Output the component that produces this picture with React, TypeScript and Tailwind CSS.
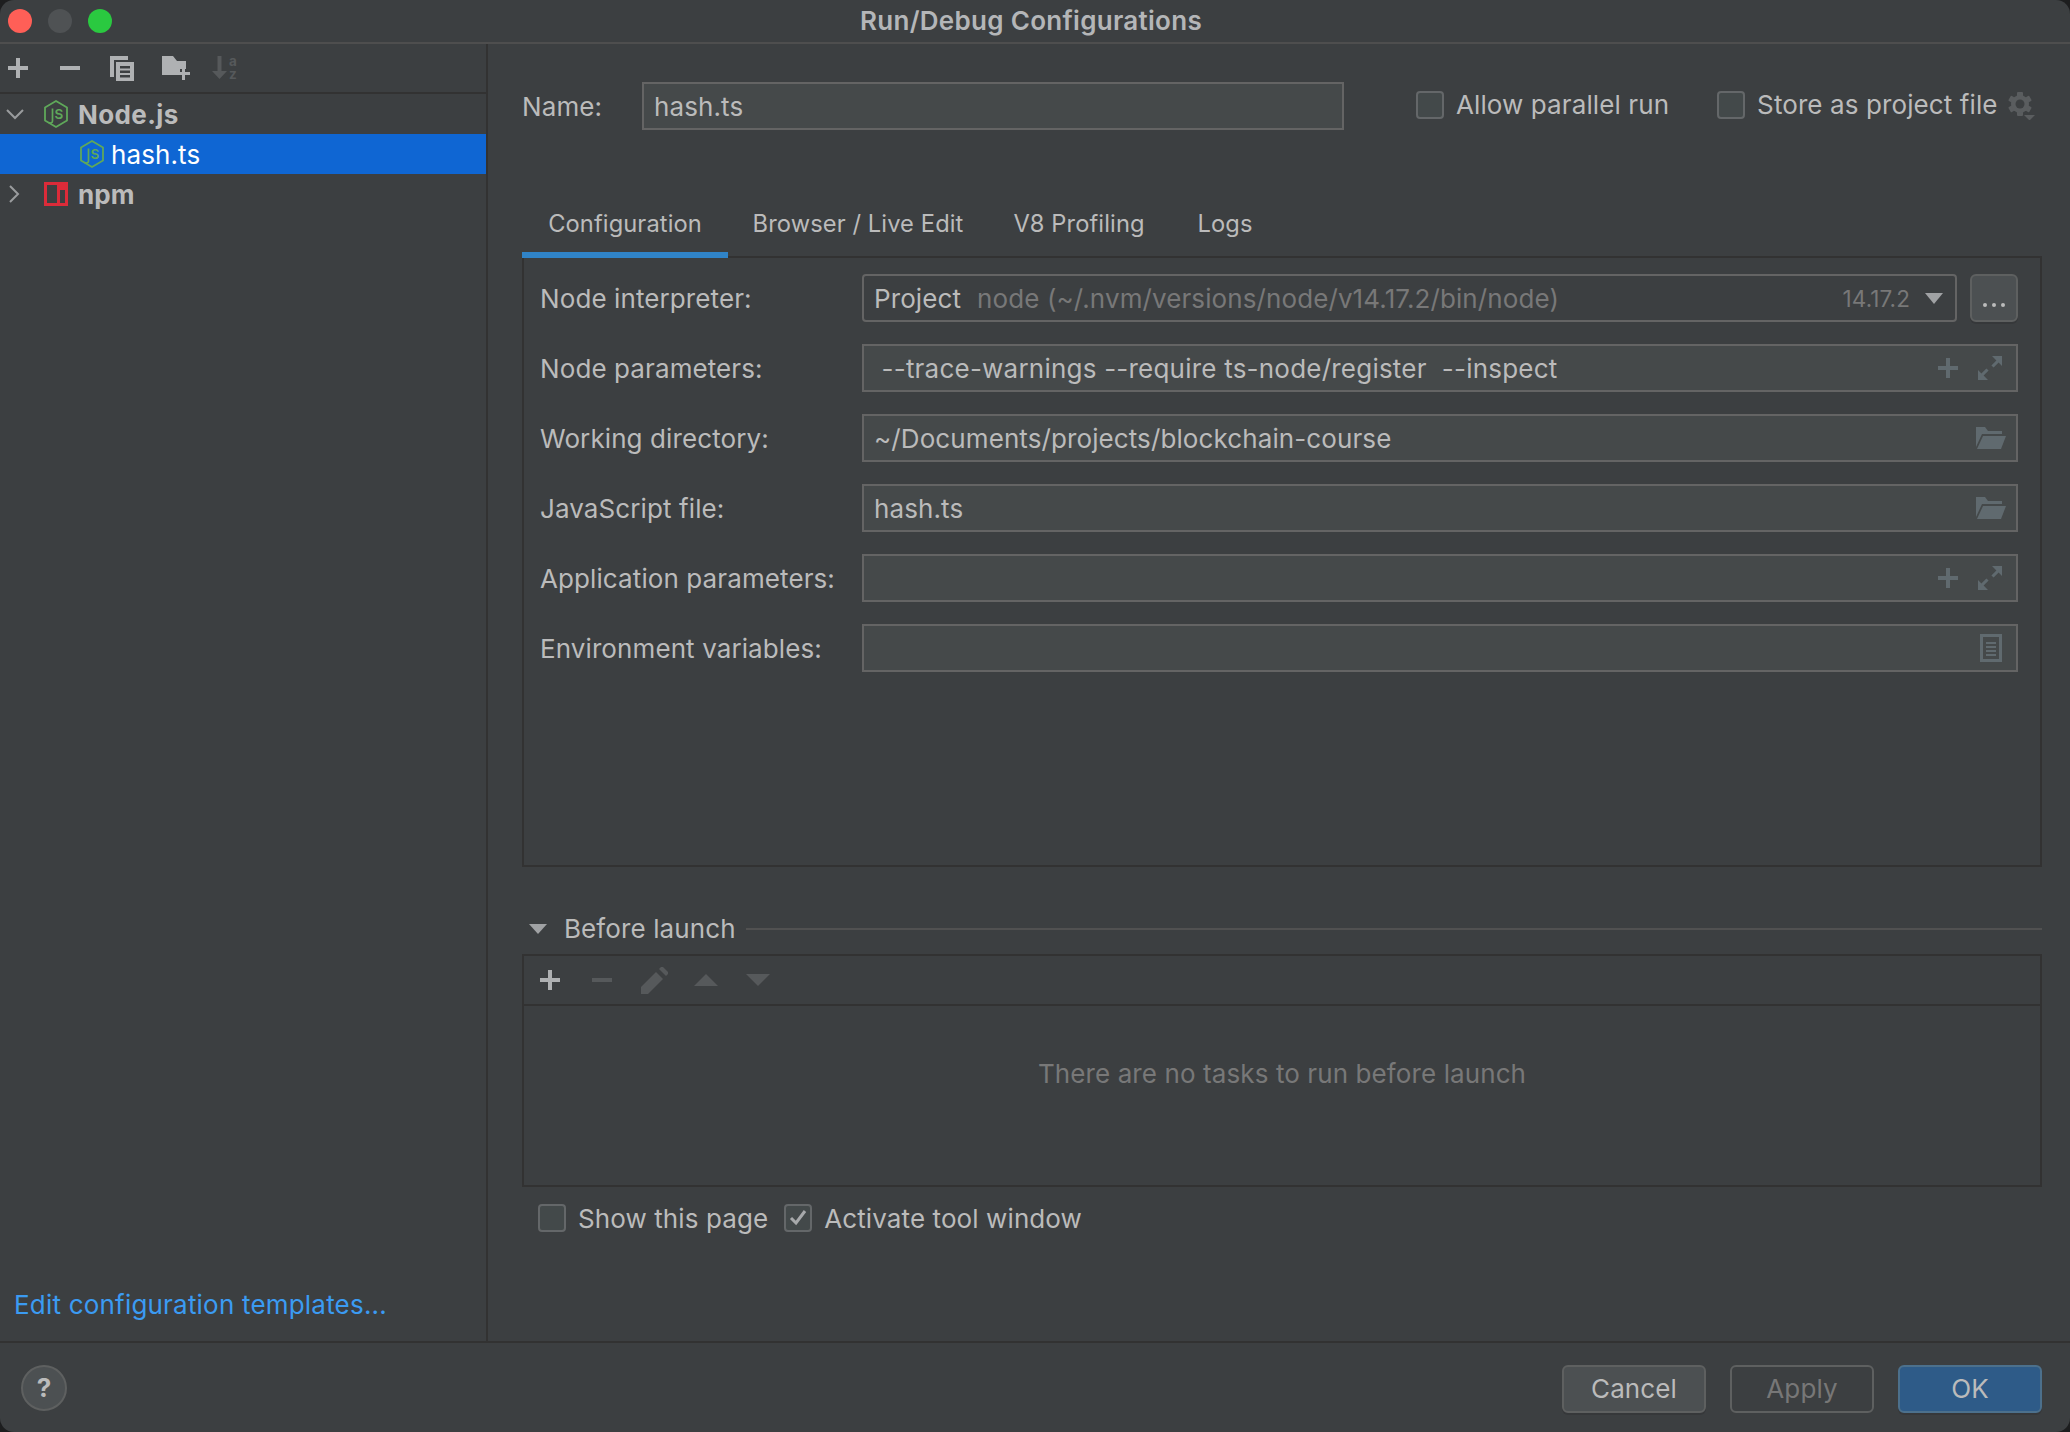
const font = "font-['Inter','Liberation_Sans',sans-serif]";

function Plus({ className = "" }: { className?: string }) {
  return (
    <svg width="20" height="20" viewBox="0 0 20 20" className={className} fill="currentColor">
      <rect x="8" y="0" width="4" height="20" />
      <rect x="0" y="8" width="20" height="4" />
    </svg>
  );
}

function Minus({ className = "" }: { className?: string }) {
  return (
    <svg width="20" height="4" viewBox="0 0 20 4" className={className} fill="currentColor">
      <rect width="20" height="4" />
    </svg>
  );
}

function CopyIcon() {
  return (
    <svg width="24" height="25" viewBox="0 0 24 25" className="text-[#afb1b3]" fill="currentColor">
      <path d="M0 0h18v4H4v17H0z" />
      <path fillRule="evenodd" d="M6 6h18v19H6zM10 10v2.500h10V10zM10 14.500v2.500h10v-2.500zM10 19v2.500h10V19z" />
    </svg>
  );
}

function FolderPlus() {
  return (
    <svg width="28" height="24" viewBox="0 0 28 24" className="text-[#afb1b3]" fill="currentColor">
      <path d="M0 0h11l4 5h9v8h-6v6H0z" />
      <path d="M20 12h3v4h5v3h-5v5h-3v-5h-5v-3h5z" />
    </svg>
  );
}

function SortIcon() {
  return (
    <svg width="30" height="34" viewBox="0 -5 30 34" className="text-[#56595b]" fill="currentColor">
      <path d="M5.500 0h4v15h5.500l-7.500 8-7.500-8h5.500z" />
      <text x="17" y="10" fontSize="13.500" fontWeight="700" fontFamily="Inter">a</text>
      <text x="17" y="23" fontSize="13.500" fontWeight="700" fontFamily="Inter">z</text>
    </svg>
  );
}

function NodeHex() {
  return (
    <svg width="24" height="28" viewBox="0 0 24 28" fill="none" className="shrink-0">
      <path d="M12 1 23 7.500v13L12 27 1 20.500v-13z" stroke="#5fa85a" strokeWidth="1.800" strokeLinejoin="round" />
      <path d="M8.500 8.500v12.500c0 2-2.400 2.600-4 1.400" stroke="#5fa85a" strokeWidth="1.700" />
      <text x="10.500" y="18.500" fontSize="13.500" fontWeight="600" fontFamily="Inter" fill="#5fa85a">S</text>
    </svg>
  );
}

function NpmIcon() {
  return (
    <svg width="24" height="24" viewBox="0 0 24 24" className="shrink-0">
      <path fillRule="evenodd" fill="#db2b39" d="M0 0h24v24H0zM3 3v18h10V3zM16 8v13h5V8z" />
    </svg>
  );
}

function Chevron({ down }: { down?: boolean }) {
  return (
    <svg width="18" height="18" viewBox="0 0 18 18" fill="none" stroke="#9a9c9e" strokeWidth="2" className="shrink-0">
      <path d={down ? "M1 5l8 8 8-8" : "M5 1l8 8-8 8"} />
    </svg>
  );
}

function Check({ on }: { on?: boolean }) {
  return (
    <span className="w-[28px] h-[28px] shrink-0 rounded-[4px] border-2 border-[#646769] bg-[#43494a] flex items-center justify-center">
      {on && (
        <svg width="18" height="16" viewBox="0 0 18 16" fill="none" stroke="#a7a9ab" strokeWidth="3">
          <path d="M2 8l5 5 9-12" />
        </svg>
      )}
    </span>
  );
}

function Gear() {
  return (
    <svg width="28" height="28" viewBox="0 0 28 28" className="ml-[10px]" fill="#5a5d5f">
      <rect x="9" y="0" width="6" height="24" rx="1" />
      <rect x="9" y="0" width="6" height="24" rx="1" transform="rotate(60 12 12)" />
      <rect x="9" y="0" width="6" height="24" rx="1" transform="rotate(120 12 12)" />
      <circle cx="12" cy="12" r="9" />
      <circle cx="12" cy="12" r="4.500" fill="#3c3f41" />
      <path d="M16 23h11l-5.500 5.500z" />
    </svg>
  );
}

function ExpandIcon() {
  return (
    <svg width="24" height="24" viewBox="0 0 24 24" fill="#606a6f">
      <path d="M14 0h10v10l-3.400-3.400-5 5-2.200-2.200 5-5z" />
      <path d="M0 24V14l3.400 3.400 5-5 2.200 2.200-5 5L10 24z" />
    </svg>
  );
}

function FolderOpen() {
  return (
    <svg width="30" height="22" viewBox="0 0 30 22" fill="#606a6f">
      <path d="M0 0h9l3 4h14v3H6L0 20z" />
      <path d="M7 9h23l-5 13H1z" />
    </svg>
  );
}

function DocIcon() {
  return (
    <svg width="22" height="28" viewBox="0 0 22 28" fill="#606a6f">
      <path fillRule="evenodd" d="M0 0h22v28H0zM3 3v22h16V3zM6 8h10v2H6zM6 12h10v2H6zM6 16h10v2H6zM6 20h10v2H6z" />
    </svg>
  );
}

function Field({ label, value, wide, children }: { label: string; value?: string; wide?: boolean; children?: React.ReactNode }) {
  return (
    <div className="flex items-center h-[48px]">
      <div className="w-[322px] shrink-0 pt-[2px] text-[#bbbbbb]">{label}</div>
      <div className="w-[1156px] h-[48px] bg-[#45494a] border-2 border-[#646464] flex items-center pl-[10px] pr-[10px] text-[#bbbbbb]">
        <span className={wide ? "flex-1 pt-[2px] whitespace-pre tracking-[0.22px]" : "flex-1 pt-[2px] whitespace-pre"}>{value}</span>
        {children}
      </div>
    </div>
  );
}

function PlusExpand() {
  return (
    <div className="flex items-center gap-[20px] mr-[4px] text-[#606a6f]">
      <Plus />
      <ExpandIcon />
    </div>
  );
}

export default function App() {
  return (
    <div className={`${font} w-[2070px] h-[1432px] bg-[#1d1e1f] overflow-hidden text-[26px] leading-none tracking-[0.1px]`}>
      <div className="w-full h-full rounded-[14px] overflow-hidden bg-[#3c3f41] flex flex-col">
        <div className="relative h-[44px] shrink-0 border-b-2 border-[#4e4e4e] flex items-center pl-[8px] gap-[16px]">
          <span className="w-[24px] h-[24px] rounded-full bg-[#ff5f57]" />
          <span className="w-[24px] h-[24px] rounded-full bg-[#4f5254]" />
          <span className="w-[24px] h-[24px] rounded-full bg-[#2ac940]" />
          <div className="absolute left-0 right-0 top-[8px] pr-[8px] text-center font-semibold tracking-[0.3px] text-[#b4b6b8]">
            Run/Debug Configurations
          </div>
        </div>

        <div className="flex-1 flex min-h-0">
          <div className="w-[488px] shrink-0 border-r-2 border-[#323232] flex flex-col">
            <div className="h-[50px] shrink-0 border-b-2 border-[#323232] flex items-center pl-[8px] text-[#afb1b3]">
              <Plus />
              <Minus className="ml-[32px]" />
              <span className="ml-[30px]"><CopyIcon /></span>
              <span className="ml-[28px]"><FolderPlus /></span>
              <span className="ml-[22px]"><SortIcon /></span>
            </div>
            <div className="h-[40px] flex items-center text-[#bbbbbb] font-bold">
              <span className="ml-[6px]"><Chevron down /></span>
              <span className="ml-[20px]"><NodeHex /></span>
              <span className="ml-[10px] pt-[2px] tracking-[0.4px]">Node.js</span>
            </div>
            <div className="h-[40px] bg-[#0f66d3] flex items-center text-white pl-[80px]">
              <NodeHex />
              <span className="ml-[7px] pt-[2px]">hash.ts</span>
            </div>
            <div className="h-[40px] flex items-center text-[#bbbbbb] font-bold">
              <span className="ml-[5px]"><Chevron /></span>
              <span className="ml-[21px]"><NpmIcon /></span>
              <span className="ml-[10px] pt-[2px]">npm</span>
            </div>
            <div className="mt-auto pl-[14px] pb-[23px] tracking-[0.2px] text-[#3b9bf2]">Edit configuration templates...</div>
          </div>

          <div className="flex-1 min-w-0 pl-[34px] pr-[28px] flex flex-col">
            <div className="h-[48px] mt-[38px] flex items-center text-[#bbbbbb]">
              <span className="w-[120px] shrink-0 pt-[2px]">Name:</span>
              <div className="w-[702px] h-[48px] bg-[#45494a] border-2 border-[#646464] flex items-center pl-[10px] pt-[2px]">hash.ts</div>
              <div className="ml-[72px] flex items-center gap-[12px] -mt-[3px]">
                <Check />
                <span>Allow parallel run</span>
              </div>
              <div className="ml-[48px] flex items-center gap-[12px] -mt-[3px]">
                <Check />
                <span>Store as project file</span>
              </div>
              <Gear />
            </div>

            <div className="relative z-10 mt-[74px] h-[54px] shrink-0 flex items-stretch text-[#bbbbbb] text-[23.700px]">
              <div className="w-[206px] flex items-center justify-center border-b-[6px] border-[#3084c8] pb-[8px]">Configuration</div>
              <div className="w-[260px] flex items-center justify-center pb-[14px]">Browser / Live Edit</div>
              <div className="w-[182px] flex items-center justify-center pb-[14px]">V8 Profiling</div>
              <div className="w-[110px] flex items-center justify-center pb-[14px]">Logs</div>
            </div>

            <div className="h-[611px] shrink-0 -mt-[2px] border-2 border-[#323232] pt-[16px] pl-[16px] flex flex-col gap-[22px]">
              <div className="flex items-center h-[48px]">
                <div className="w-[322px] shrink-0 pt-[2px] text-[#bbbbbb]">Node interpreter:</div>
                <div className="w-[1095px] h-[48px] rounded-[4px] border-2 border-[#646464] flex items-center pl-[10px] pt-[2px]">
                  <span className="text-[#bbbbbb]">Project</span>
                  <span className="ml-[16px] text-[#787878] flex-1">node (~/.nvm/versions/node/v14.17.2/bin/node)</span>
                  <span className="text-[#787878] text-[22.500px]">14.17.2</span>
                  <span className="ml-[15px] mr-[12px] -mt-[2px] w-0 h-0 border-l-[9px] border-r-[9px] border-t-[11px] border-l-transparent border-r-transparent border-t-[#a0a2a4]" />
                </div>
                <div className="ml-[13px] w-[48px] h-[48px] rounded-[6px] bg-[#4c5052] border-2 border-[#5e6060] flex items-end justify-center pb-[13px] shadow-[0_2px_0_#36383a]">
                  <span className="flex gap-[5px]">
                    <i className="w-[4px] h-[4px] rounded-full bg-[#bbbbbb]" />
                    <i className="w-[4px] h-[4px] rounded-full bg-[#bbbbbb]" />
                    <i className="w-[4px] h-[4px] rounded-full bg-[#bbbbbb]" />
                  </span>
                </div>
              </div>
              <Field label="Node parameters:" value=" --trace-warnings --require ts-node/register  --inspect" wide>
                <PlusExpand />
              </Field>
              <Field label="Working directory:" value="~/Documents/projects/blockchain-course">
                <FolderOpen />
              </Field>
              <Field label="JavaScript file:" value="hash.ts">
                <FolderOpen />
              </Field>
              <Field label="Application parameters:">
                <PlusExpand />
              </Field>
              <Field label="Environment variables:">
                <span className="mr-[4px] flex"><DocIcon /></span>
              </Field>
            </div>

            <div className="mt-[50px] h-[24px] shrink-0 flex items-center text-[#bbbbbb]">
              <span className="ml-[7px] w-0 h-0 border-l-[9px] border-r-[9px] border-t-[10px] border-l-transparent border-r-transparent border-t-[#a0a2a4]" />
              <span className="ml-[17px]">Before launch</span>
              <span className="ml-[10px] flex-1 h-[2px] bg-[#515151]" />
            </div>

            <div className="mt-[13px] h-[233px] shrink-0 border-2 border-[#323232] flex flex-col">
              <div className="h-[50px] shrink-0 border-b-2 border-[#323232] flex items-center pl-[16px]">
                <Plus className="text-[#afb1b3]" />
                <Minus className="ml-[32px] text-[#56595b]" />
                <svg width="27" height="27" viewBox="0 0 27 27" className="ml-[29px]" fill="#56595b">
                  <path d="M0 20 15 5l7 7L7 27H0z" />
                  <path d="M18 2l2-2q1-.5 2 0l5 5q.5 1 0 2l-2 2z" />
                </svg>
                <span className="ml-[26px] w-0 h-0 border-l-[12px] border-r-[12px] border-b-[12px] border-l-transparent border-r-transparent border-b-[#56595b]" />
                <span className="ml-[28px] w-0 h-0 border-l-[12px] border-r-[12px] border-t-[12px] border-l-transparent border-r-transparent border-t-[#56595b]" />
              </div>
              <div className="flex-1 flex items-center justify-center text-[#787878] pb-[44px]">There are no tasks to run before launch</div>
            </div>

            <div className="mt-[17px] flex items-center text-[#bbbbbb] pl-[16px]">
              <Check />
              <span className="ml-[12px] pt-[2px]">Show this page</span>
              <span className="ml-[16px]"><Check on /></span>
              <span className="ml-[12px] pt-[2px]">Activate tool window</span>
            </div>
          </div>
        </div>

        <div className="h-[91px] shrink-0 border-t-2 border-[#323232] flex items-start pt-[22px] pl-[21px] pr-[28px]">
          <div className="w-[46px] h-[46px] rounded-full bg-[#4c5052] border-2 border-[#5e6060] flex items-center justify-center text-[#bbbbbb] font-bold">?</div>
          <div className="ml-auto flex gap-[24px]">
            <div className="w-[144px] h-[48px] rounded-[6px] bg-[#4c5052] border-2 border-[#5e6060] flex items-center justify-center text-[#bbbbbb] shadow-[0_2px_0_#36383a]">Cancel</div>
            <div className="w-[144px] h-[48px] rounded-[6px] border-2 border-[#5e6060] flex items-center justify-center text-[#777777]">Apply</div>
            <div className="w-[144px] h-[48px] rounded-[6px] bg-[#2e5b88] border-2 border-[#4c708c] flex items-center justify-center text-[#bbbbbb] shadow-[0_2px_0_#36383a]">OK</div>
          </div>
        </div>
      </div>
    </div>
  );
}
